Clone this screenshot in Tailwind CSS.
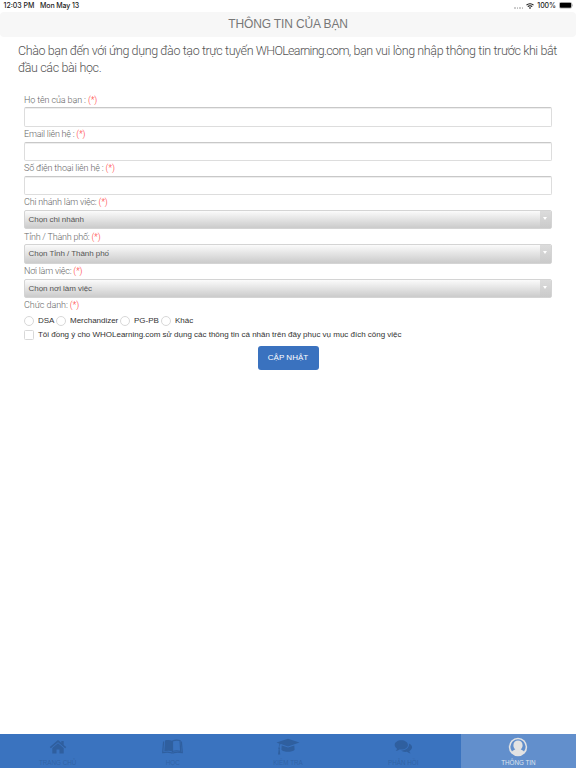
<!DOCTYPE html>
<html lang="vi">
<head>
  <meta charset="UTF-8" />
  <meta name="viewport" content="width=device-width, initial-scale=1.0"/>
  <title>Thông tin của bạn</title>
  <script src="https://cdn.jsdelivr.net/npm/@tailwindcss/browser@4"></script>
</head>
<body class="bg-white">
  <div class="w-[576px] h-[768px] flex flex-col overflow-hidden font-['Liberation_Sans',sans-serif] whitespace-nowrap">

    <!-- Status bar -->
    <div class="h-[11.5px] shrink-0 flex items-center justify-between pl-[3.5px] pr-[3px] text-[7px] leading-[12px] font-medium text-[#222] font-['Inter',sans-serif]">
      <div class="flex gap-[5.5px]">
        <span>12:03 PM</span>
        <span class="tracking-[-0.12px]">Mon May 13</span>
      </div>
      <div class="flex items-center">
        <span class="flex gap-[1px] mr-[3px] pt-[5px]">
          <i class="size-[1.6px] rounded-full bg-[#bbb]"></i>
          <i class="size-[1.6px] rounded-full bg-[#bbb]"></i>
          <i class="size-[1.6px] rounded-full bg-[#bbb]"></i>
          <i class="size-[1.6px] rounded-full bg-[#bbb]"></i>
        </span>
        <svg class="w-[8px] h-[6px] mr-[3px]" viewBox="0 0 16 12" fill="none" stroke="#111" stroke-width="2.2">
          <path d="M1 4.3a10 10 0 0 1 14 0M3.6 7.2a6.2 6.2 0 0 1 8.8 0"/>
          <path d="M8 12 5.7 9.4a3.3 3.3 0 0 1 4.6 0z" fill="#111" stroke="none"/>
        </svg>
        <span class="mr-[2.5px] tracking-[-0.05px]">100%</span>
        <svg class="w-[14.5px] h-[6.6px]" viewBox="0 0 29 13">
          <rect x=".5" y=".5" width="25" height="12" rx="3" fill="#fff" stroke="#999"/>
          <rect x="1.6" y="1.6" width="22.8" height="9.8" rx="2" fill="#000"/>
          <path d="M27 4.5c2 .7 2 3.3 0 4z" fill="#999"/>
        </svg>
      </div>
    </div>

    <!-- Title -->
    <header class="h-[25.5px] shrink-0 rounded-[4px] bg-[#f7f7f7] flex items-center justify-center text-[12px] text-[#777]">
      <h1 class="tracking-[-0.13px]">THÔNG TIN CỦA BẠN</h1>
    </header>

    <main class="flex-1 flex flex-col">
      <p class="pl-[18px] pt-[6px] text-[12.5px] leading-[16.5px] font-light text-[#555] font-['Roboto',sans-serif]">
        <span class="tracking-[-0.39px]">Chào bạn đến với ứng dụng đào tạo trực tuyến <span class="tracking-[-0.7px]">WHOLearning.com</span>, bạn vui lòng nhập thông tin trước khi bắt</span><br>
        <span class="tracking-[-0.37px]">đầu các bài học.</span>
      </p>

      <form class="mt-[16.5px] ml-[24px] w-[528px] text-[9px]">
        <div class="font-light text-[#666] font-['Roboto',sans-serif]">
          <div class="h-[34.25px]">
            <label class="block h-[14.75px] leading-[14px] tracking-[-0.12px]">Họ tên của bạn : <span class="text-[#ff3030]">(*)</span></label>
            <input type="text" class="block w-full h-[19.25px] rounded-[2px] border border-[#ddd] border-t-[#c8c8c8] bg-white shadow-[inset_0_1px_0_#eee]">
          </div>
          <div class="h-[34.25px]">
            <label class="block h-[14.75px] leading-[14px] tracking-[-0.22px]">Email liên hệ : <span class="text-[#ff3030]">(*)</span></label>
            <input type="text" class="block w-full h-[19.25px] rounded-[2px] border border-[#ddd] border-t-[#c8c8c8] bg-white shadow-[inset_0_1px_0_#eee]">
          </div>
          <div class="h-[34.25px]">
            <label class="block h-[14.75px] leading-[14px] tracking-[-0.15px]">Số điện thoại liên hệ : <span class="text-[#ff3030]">(*)</span></label>
            <input type="text" class="block w-full h-[19.25px] rounded-[2px] border border-[#ddd] border-t-[#c8c8c8] bg-white shadow-[inset_0_1px_0_#eee]">
          </div>
          <div class="h-[34.25px]">
            <label class="block h-[14.75px] leading-[14px] tracking-[-0.2px]">Chi nhánh làm việc: <span class="text-[#ff3030]">(*)</span></label>
            <div class="flex h-[19.25px] rounded-[2px] border border-[#d4d4d4] overflow-hidden bg-linear-to-b from-[#fbfbfb] to-[#cbcbcb]">
              <span class="flex-1 pl-[3.5px] leading-[18px] text-[8px] font-normal tracking-[-0.05px] text-[#555] font-['Liberation_Sans',sans-serif]">Chọn chi nhánh</span>
              <span class="w-[11.5px] bg-linear-to-b from-[#dcdcdc] to-[#cacaca] flex justify-center pt-[6px]"><svg class="w-[4px] h-[3px]" viewBox="0 0 4 3"><path d="M0 0h4L2 3z" fill="#fff"/></svg></span>
            </div>
          </div>
          <div class="h-[34.25px]">
            <label class="block h-[14.75px] leading-[14px] tracking-[-0.22px]">Tỉnh / Thành phố: <span class="text-[#ff3030]">(*)</span></label>
            <div class="flex h-[19.25px] rounded-[2px] border border-[#d4d4d4] overflow-hidden bg-linear-to-b from-[#fbfbfb] to-[#cbcbcb]">
              <span class="flex-1 pl-[3.5px] leading-[18px] text-[8px] font-normal tracking-[-0.05px] text-[#555] font-['Liberation_Sans',sans-serif]">Chọn Tỉnh / Thành phố</span>
              <span class="w-[11.5px] bg-linear-to-b from-[#dcdcdc] to-[#cacaca] flex justify-center pt-[6px]"><svg class="w-[4px] h-[3px]" viewBox="0 0 4 3"><path d="M0 0h4L2 3z" fill="#fff"/></svg></span>
            </div>
          </div>
          <div class="h-[34.25px]">
            <label class="block h-[14.75px] leading-[14px] tracking-[-0.22px]">Nơi làm việc: <span class="text-[#ff3030]">(*)</span></label>
            <div class="flex h-[19.25px] rounded-[2px] border border-[#d4d4d4] overflow-hidden bg-linear-to-b from-[#fbfbfb] to-[#cbcbcb]">
              <span class="flex-1 pl-[3.5px] leading-[18px] text-[8px] font-normal tracking-[-0.05px] text-[#555] font-['Liberation_Sans',sans-serif]">Chọn nơi làm việc</span>
              <span class="w-[11.5px] bg-linear-to-b from-[#dcdcdc] to-[#cacaca] flex justify-center pt-[6px]"><svg class="w-[4px] h-[3px]" viewBox="0 0 4 3"><path d="M0 0h4L2 3z" fill="#fff"/></svg></span>
            </div>
          </div>
          <label class="block h-[17px] leading-[14px] tracking-[-0.08px]">Chức danh: <span class="text-[#ff3030]">(*)</span></label>
        </div>

        <div class="flex items-center h-[12px] text-[8px] text-[#333]">
          <i class="size-[10px] rounded-full border border-[#d8d8d8]"></i><span class="w-[18px] ml-[4px]">DSA</span>
          <i class="size-[10px] rounded-full border border-[#d8d8d8]"></i><span class="w-[50px] ml-[4px] tracking-[-0.02px]">Merchandizer</span>
          <i class="size-[10px] rounded-full border border-[#d8d8d8]"></i><span class="w-[27px] ml-[4px] tracking-[-0.02px]">PG-PB</span>
          <i class="size-[10px] rounded-full border border-[#d8d8d8]"></i><span class="ml-[4px]">Khác</span>
        </div>
        <div class="flex items-center h-[12px] mt-[1.5px] text-[8px] text-[#333]">
          <i class="size-[10px] rounded-[1.5px] border border-[#d8d8d8]"></i>
          <span class="ml-[4px] tracking-[-0.012px]">Tôi đồng ý cho WHOLearning.com sử dụng các thông tin cá nhân trên đây phục vụ mục đích công việc</span>
        </div>
        <div class="flex justify-center mt-[5px]">
          <button type="button" class="w-[61px] h-[24px] rounded-[3px] bg-[#3a72bf] text-[8px] text-white">CẬP NHẬT</button>
        </div>
      </form>
    </main>

    <!-- Bottom tabs -->
    <nav class="h-[34px] shrink-0 grid grid-cols-5 bg-[#3a73bf] text-[6.3px] text-[#3163a6]">
      <a class="flex flex-col items-center pt-[5px]">
        <svg class="w-[18px] h-[16px]" viewBox="0 0 18 16" fill="#2f5f9f">
          <path d="M9 1 .8 8l1 1.200L9 3.200l7.200 6 1-1.200L14.700 5.900V2h-2.400v1.800z"/>
          <path d="M9 4.200 3.300 9V14.500h4.200v-4h3v4h4.200V9z"/>
        </svg>
        <span class="mt-[4px] leading-[8px]">TRANG CHỦ</span>
      </a>
      <a class="flex flex-col items-center pt-[5px]">
        <svg class="w-[21px] h-[16px]" viewBox="0 0 21 16" fill="#2f5f9f">
          <path d="M3 1.500C5.500.8 8 .8 10.500 2v10.500C8 11.500 5 11.500 2.300 12.300z"/>
          <path d="M10.500 2c2.500-1.200 5-1.200 7.500-.5l.7 10.800c-3-.8-5.700-.8-8.200.2z" fill="none" stroke="#2f5f9f" stroke-width="1.200"/>
          <path d="M1.600 2.500.7 13.600c3.500-.6 6.500-.6 8.500.2h2.600c2-.8 5-.8 8.500-.2L19.400 2.500" fill="none" stroke="#2f5f9f" stroke-width="1.200"/>
        </svg>
        <span class="mt-[4px] leading-[8px]">HỌC</span>
      </a>
      <a class="flex flex-col items-center pt-[4px]">
        <svg class="w-[24px] h-[17px]" viewBox="0 0 24 17" fill="#2f5f9f">
          <path d="M12 .8 23.500 4.600 12 8.400 5 6.100 4 6.600c-.5.8-.6 1.700-.6 2.600l.8 1-.6.800.7 5.400H2l.7-5.400-.6-.8.700-1c0-1.300.1-2.400.7-3.500L.5 4.600z"/>
          <path d="m5.700 7.500 6.300 2 6.300-2 .3 4.300c-2.500 2.700-10.700 2.700-13.200 0z"/>
        </svg>
        <span class="mt-[4px] leading-[8px]">KIỂM TRA</span>
      </a>
      <a class="flex flex-col items-center pt-[5px]">
        <svg class="w-[19px] h-[16px]" viewBox="0 0 19 16" fill="#2f5f9f">
          <path d="M7.300 1.300c-3.700 0-6.600 2.100-6.600 4.700 0 1.500 1 2.800 2.400 3.700-.2.800-.7 1.500-1.300 2 1.400 0 2.600-.6 3.600-1.300 5 .7 8.500-1.500 8.500-4.400 0-2.600-2.900-4.700-6.600-4.700z"/>
          <path d="M14.900 4.500c.7 3.800-2.900 6.900-7.900 7.100 1.500 1.200 3.800 1.600 5.900 1.200 1 .8 2.300 1.500 3.800 1.500-.7-.6-1.200-1.300-1.400-2.100 3.600-2.100 3.900-5.800-.4-7.700z"/>
        </svg>
        <span class="mt-[4px] leading-[8px]">PHẢN HỒI</span>
      </a>
      <a class="flex flex-col items-center pt-[3px] bg-[#628fcc] text-[#dde4ee]">
        <svg class="size-[20px]" viewBox="0 0 20 20">
          <circle cx="10" cy="10" r="9.200" fill="#e3e3e3"/>
          <path d="M4 14.600C5 13.200 6.300 12.800 7.300 12.400 6 11.200 5.400 9.800 5.400 8.200 5.400 5.600 7.300 3.600 10 3.600s4.600 2 4.600 4.600c0 1.600-.6 3-1.900 4.200 1 .4 2.300.8 3.300 2.200A7.600 7.600 0 1 0 4 14.600z" fill="#628fcc"/>
          <path d="M10 4.600c2.200 0 3.700 1.600 3.700 3.700S12.200 12.300 10 12.300 6.300 10.400 6.300 8.300 7.800 4.600 10 4.600z" fill="#e3e3e3"/>
        </svg>
        <span class="mt-[2px] leading-[8px]">THÔNG TIN</span>
      </a>
    </nav>
  </div>
</body>
</html>
